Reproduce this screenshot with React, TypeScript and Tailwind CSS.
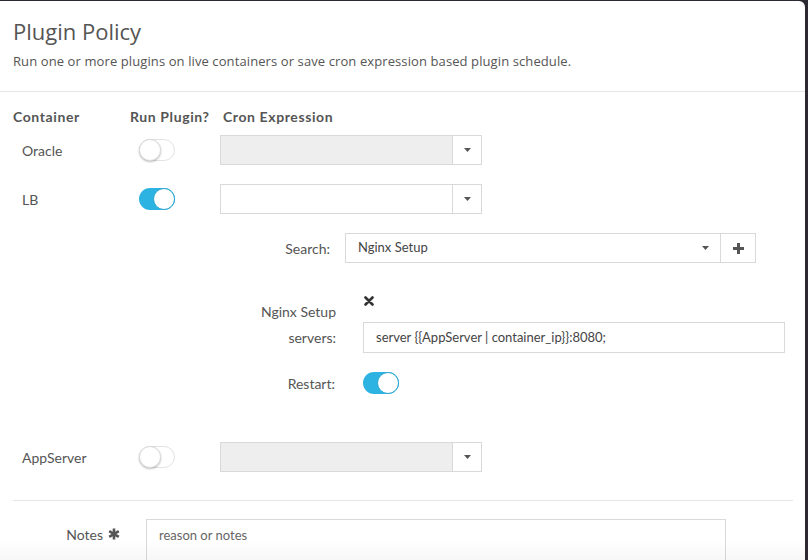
import React from "react";

const Toggle = ({ on }: { on: boolean }) =>
  on ? (
    <div className="relative w-[36px] h-[22px] rounded-full bg-[#2db3e1]">
      <div className="absolute right-0 top-0 w-[22px] h-[22px] rounded-full bg-white border border-[#2aa6d2]" />
    </div>
  ) : (
    <div className="relative w-[36px] h-[22px] rounded-full bg-white border border-[#e3e3e3]">
      <div className="absolute left-[-1px] top-[-1px] w-[22px] h-[22px] rounded-full bg-white border border-[#dcdcdc] shadow-[0_1px_2px_rgba(0,0,0,0.25)]" />
    </div>
  );

const Caret = () => (
  <svg width="7" height="4" viewBox="0 0 7 4">
    <path d="M0 0 L7 0 L3.5 4 Z" fill="#555" />
  </svg>
);

const CronSelect = ({ disabled }: { disabled: boolean }) => (
  <div className="flex w-[262px] h-[30px] border border-[#d9d9d9]">
    <div className={`flex-1 ${disabled ? "bg-[#eeeeee]" : "bg-white"}`} />
    <div className="w-[29px] flex items-center justify-center border-l border-[#d9d9d9] bg-white">
      <Caret />
    </div>
  </div>
);

export default function App() {
  const font = { fontFamily: "Lato, 'Open Sans', sans-serif" };
  return (
    <div className="w-[808px] h-[560px] bg-[#2c2933] overflow-hidden pt-[1px] pr-[3px]" style={font}>
      <div className="w-full h-full bg-white rounded-tr-[6px] text-[#555] flex flex-col relative overflow-hidden">
        <div className="shrink-0 h-[91px] border-b border-[#e5e5e5] px-[13px] pt-[16px]" style={{ fontFamily: "'Open Sans', sans-serif" }}>
          <div className="text-[22px] leading-[28px] text-[#555]">Plugin Policy</div>
          <div className="text-[13px] leading-[18px] mt-[7px] text-[#555] tracking-[0.1px]">
            Run one or more plugins on live containers or save cron expression based plugin schedule.
          </div>
        </div>

        <div className="shrink-0 pt-[14px] pl-[13px] flex flex-col">
          <div className="flex h-[20px] items-center text-[14px] font-bold text-[#555] tracking-[0.6px]">
            <div className="w-[117px]">Container</div>
            <div className="w-[93px]">Run Plugin?</div>
            <div>Cron Expression</div>
          </div>

          <div className="flex items-center mt-[9px] h-[30px]">
            <div className="w-[117px] pl-[9px] text-[14px]">Oracle</div>
            <div className="w-[90px] pl-[9px]"><Toggle on={false} /></div>
            <CronSelect disabled />
          </div>

          <div className="flex items-center mt-[19px] h-[30px]">
            <div className="w-[117px] pl-[9px] text-[14px]">LB</div>
            <div className="w-[90px] pl-[9px]"><Toggle on /></div>
            <CronSelect disabled={false} />
          </div>

          <div className="flex items-center mt-[19px] h-[30px]">
            <div className="w-[318px] text-right text-[14px] pr-[1px]">Search:</div>
            <div className="ml-[14px] flex w-[411px] h-[30px] border border-[#d9d9d9]">
              <div className="flex-1 flex items-center pl-[12px] text-[13px] text-[#444]">Nginx Setup</div>
              <div className="w-[29px] flex items-center justify-center"><Caret /></div>
              <div className="w-[35px] flex items-center justify-center border-l border-[#d9d9d9]">
                <svg width="11" height="11" viewBox="0 0 11 11">
                  <rect x="4" y="0" width="3" height="11" fill="#555" />
                  <rect x="0" y="4" width="11" height="3" fill="#555" />
                </svg>
              </div>
            </div>
          </div>

          <div className="flex mt-[33px]">
            <div className="w-[323px] text-right text-[14px] leading-[26px] pt-[3px]">
              <div>Nginx Setup</div>
              <div>servers:</div>
            </div>
            <div className="ml-[27px] flex flex-col">
              <div className="h-[26px] flex items-start pl-[1px]">
                <svg width="10" height="10" viewBox="0 0 10 10">
                  <path d="M1.5 1.5 L8.5 8.5 M8.5 1.5 L1.5 8.5" stroke="#333" strokeWidth="2.6" strokeLinecap="round" />
                </svg>
              </div>
              <div className="w-[422px] h-[31px] border border-[#d9d9d9] flex items-center pl-[12px] text-[13px] text-[#444]">
                {"server {{AppServer | container_ip}}:8080;"}
              </div>
            </div>
          </div>

          <div className="flex items-center mt-[18px] h-[24px]">
            <div className="w-[322px] text-right text-[14px]">Restart:</div>
            <div className="ml-[28px]"><Toggle on /></div>
          </div>

          <div className="flex items-center mt-[47px] h-[30px]">
            <div className="w-[117px] pl-[9px] text-[14px]">AppServer</div>
            <div className="w-[90px] pl-[9px]"><Toggle on={false} /></div>
            <CronSelect disabled />
          </div>

          <div className="mt-[28px] w-[780px] border-t border-[#e5e5e5]" />

          <div className="flex mt-[18px]">
            <div className="w-[107px] flex items-center justify-end h-[30px] text-[14px] gap-[5px]">
              <span>Notes</span>
              <svg width="12" height="12" viewBox="0 0 12 12">
                <path d="M6 0.5 L6 11.5 M1.2 3.2 L10.8 8.8 M10.8 3.2 L1.2 8.8" stroke="#555" strokeWidth="2.6" />
              </svg>
            </div>
            <div className="ml-[26px] w-[580px] h-[60px] border border-[#d9d9d9] pl-[12px] pt-[6px] text-[13px] text-[#666]">
              reason or notes
            </div>
          </div>
        </div>
        <div className="absolute left-0 right-0 bottom-0 h-[20px] bg-gradient-to-b from-transparent to-[rgba(0,0,0,0.03)] pointer-events-none" />
      </div>
    </div>
  );
}
